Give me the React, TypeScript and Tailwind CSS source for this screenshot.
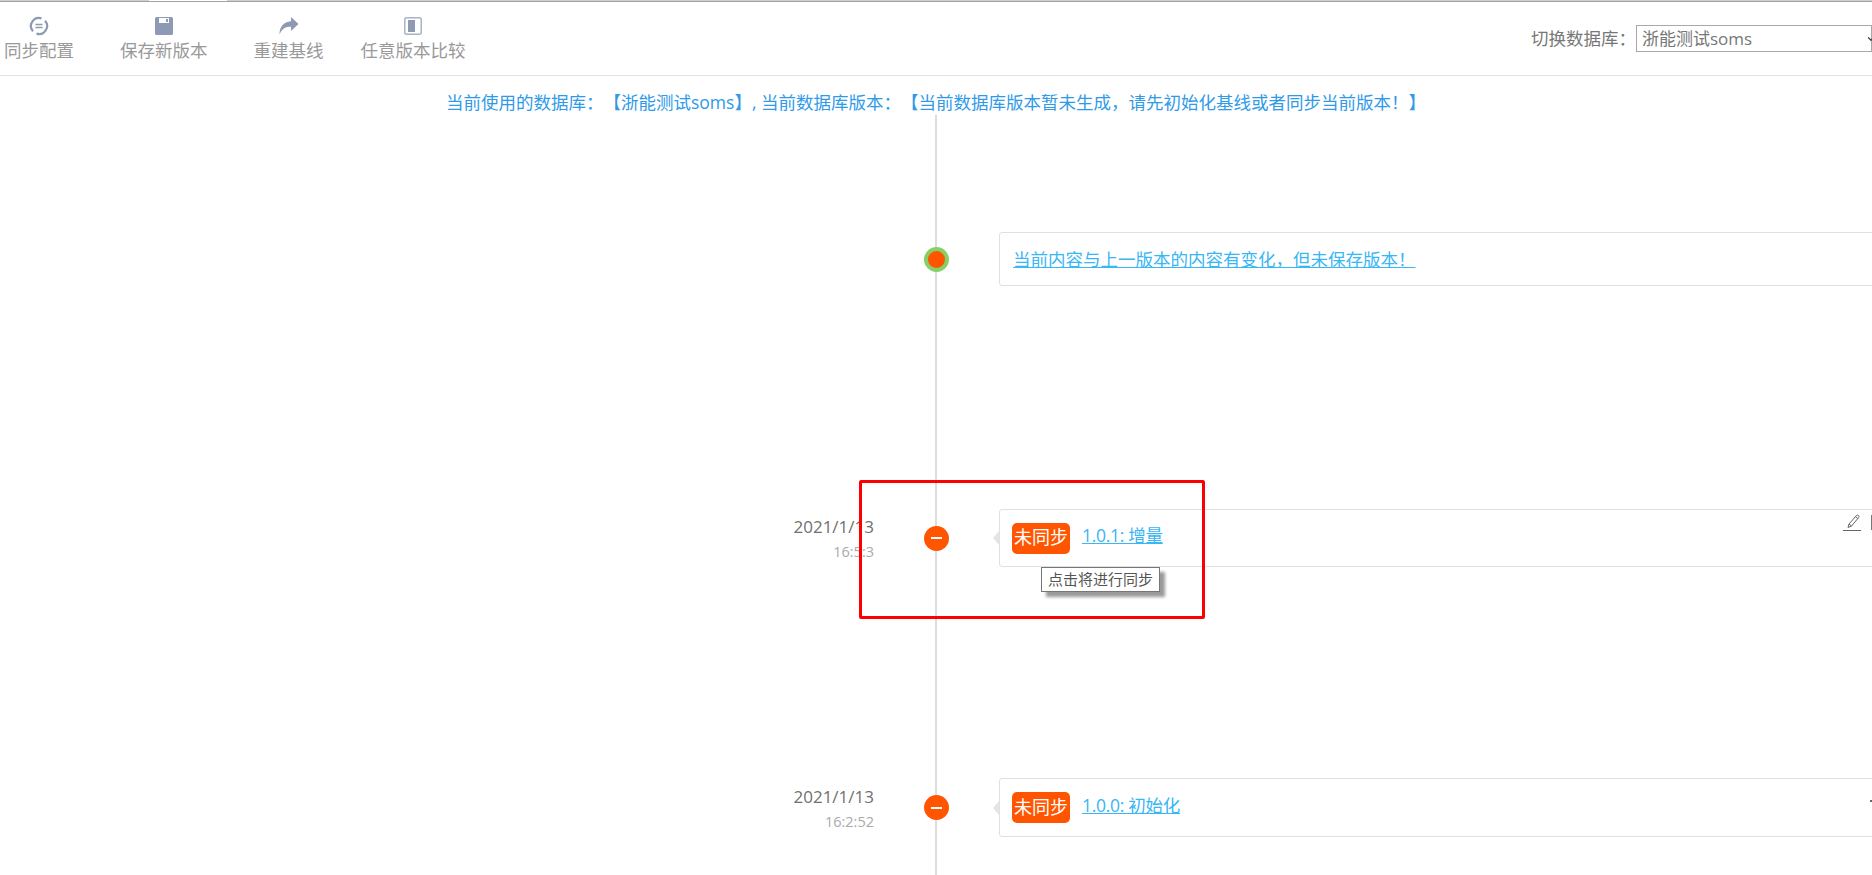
import React from 'react';
import { ChevronDown } from 'lucide-react';

const SyncIcon = () => (
  <svg width="20" height="20" viewBox="0 0 20 20" fill="none" stroke="#8e99b3">
    <path d="M12.500 2.400A8 8 0 0 0 4 15.300" strokeWidth="2.200" />
    <path d="M7.500 17.600A8 8 0 0 0 16 4.700" strokeWidth="2.200" />
    <path d="M6.500 8.500h7M6.500 11.500h7" strokeWidth="1.500" />
  </svg>
);

const SaveIcon = () => (
  <svg width="18" height="18" viewBox="0 0 18 18">
    <path
      d="M1.500 0h15A1.500 1.500 0 0 1 18 1.500v15a1.500 1.500 0 0 1-1.500 1.500h-15A1.500 1.500 0 0 1 0 16.500v-15A1.500 1.500 0 0 1 1.500 0zM4 1v5h10V1zM11 2h2v3h-2z"
      fill="#8e99b3"
      fillRule="evenodd"
    />
  </svg>
);

const ShareIcon = () => (
  <svg width="20" height="18" viewBox="0 0 20 18">
    <path d="M12 0l7.500 7-7.500 7V9.800C6.500 9.800 3 11.500 0.500 17.500 0.500 10 4.500 4.600 12 4.200z" fill="#8e99b3" />
  </svg>
);

const CompareIcon = () => (
  <svg width="18" height="18" viewBox="0 0 18 18">
    <rect x="0.750" y="0.750" width="16.500" height="16.500" rx="2" fill="none" stroke="#a9b2c6" strokeWidth="1.500" />
    <rect x="4" y="3" width="7" height="12" fill="#8e99b3" />
  </svg>
);

const PencilIcon = () => (
  <svg width="19" height="18" viewBox="0 0 19 18" fill="none" stroke="#666666" strokeWidth="1">
    <path d="M5 14.500l1-3.500 7.500-8.500a1.500 1.500 0 0 1 2.200 2L8.500 13z" />
    <path d="M6 11l2.500 2M12.500 3.500l2.500 2.200" />
    <path d="M0 17.500h18" />
  </svg>
);

const tools = [
  { label: '同步配置', icon: <SyncIcon />, className: '' },
  { label: '保存新版本', icon: <SaveIcon />, className: 'ml-[46px]' },
  { label: '重建基线', icon: <ShareIcon />, className: 'ml-[46px]' },
  { label: '任意版本比较', icon: <CompareIcon />, className: 'ml-[37px]' },
];

const Badge = () => (
  <span className="flex h-[31px] w-[58px] items-center justify-center rounded-[5px] bg-[#ff5500] pb-px text-[18px] text-white">
    未同步
  </span>
);

const MinusDot = () => (
  <span className="flex h-[25px] w-[25px] items-center justify-center rounded-full bg-[#ff5500]">
    <span className="h-0.5 w-[11px] bg-white" />
  </span>
);

const Arrow = () => (
  <span className="absolute left-[-7px] top-1/2 -translate-y-1/2 border-y-[7px] border-r-[6px] border-y-transparent border-r-[#e4e4e4]" />
);

const DateCell = ({ date, time, className }: { date: string; time: string; className: string }) => (
  <div className={`flex w-[874px] flex-col items-end ${className}`}>
    <span className="text-[17px] leading-[24px] text-[#707070]">{date}</span>
    <span className="text-[14.500px] leading-[25px] text-[#aaaaaa]">{time}</span>
  </div>
);

export default function App() {
  return (
    <div className="relative h-screen overflow-hidden bg-white font-['Open_Sans','Noto_Sans_CJK_SC',sans-serif] [text-spacing-trim:space-all]">
      <div className="flex h-px">
        <div className="w-[149px] bg-[#cfcfcf]" />
        <div className="w-[78px] bg-white" />
        <div className="flex-1 bg-[#cfcfcf]" />
      </div>
      <div className="h-px bg-[#a3a3a3]" />

      {/* toolbar */}
      <div className="flex h-[74px] items-start justify-between border-b border-[#e2e2e2] pl-1">
        <div className="flex">
          {tools.map((t) => (
            <div key={t.label} className={`flex flex-col items-center ${t.className}`}>
              <div className="mt-[15px] flex h-[18px] items-center">{t.icon}</div>
              <span className="mt-px text-[17.500px] leading-[28px] text-[#999999]">{t.label}</span>
            </div>
          ))}
        </div>
        <div className="mt-[23px] flex items-center">
          <span className="text-[17.500px] text-[#777777]">切换数据库：</span>
          <div className="flex h-[27px] w-[236px] items-center justify-between border border-[#a9a9a9] pl-[5px] text-[17px] text-[#777777]">
            浙能测试soms
            <ChevronDown size={10} strokeWidth={3} className="mr-[-5px] text-[#444444]" />
          </div>
        </div>
      </div>

      <div className="h-[39px] pt-[13px] text-center text-[17.500px] leading-[26px] text-[#2f9ae8]">
        当前使用的数据库：【浙能测试soms】, 当前数据库版本：【当前数据库版本暂未生成，请先初始化基线或者同步当前版本！】
      </div>

      {/* timeline */}
      <div className="relative h-[760px] pt-[117px]">
        <div className="absolute bottom-0 left-[935px] top-0 w-0.5 bg-[#dddddd]" />

        <div className="relative flex items-center">
          <div className="w-[874px]" />
          <div className="flex w-[125px] justify-center">
            <span className="flex h-[25px] w-[25px] items-center justify-center rounded-full border-4 border-[#87d068] bg-[#ff5500]" />
          </div>
          <div className="mr-[-10px] flex h-[54px] flex-1 items-center rounded-[3px] border border-[#e0e0e0] pl-[13px]">
            <a className="text-[17.500px] text-[#38b6f5] underline">当前内容与上一版本的内容有变化，但未保存版本！</a>
          </div>
        </div>

        <div className="relative mt-[223px] flex items-center">
          <DateCell date="2021/1/13" time="16:5:3" className="mt-[2px]" />
          <div className="flex w-[125px] justify-center">
            <MinusDot />
          </div>
          <div className="relative mr-[-10px] flex h-[58px] flex-1 items-center gap-[12px] rounded-[3px] border border-[#e0e0e0] pl-[12px]">
            <Arrow />
            <Badge />
            <a className="mb-[5px] text-[17.500px] tracking-[-0.3px] text-[#38b6f5] underline">1.0.1: 增量</a>
            <span className="absolute left-[843px] top-[3px]">
              <PencilIcon />
            </span>
            <span className="absolute left-[871px] top-[5px] h-[15px] w-px bg-[#777777]" />
            <span className="absolute left-[41px] top-[57px] z-10 border border-[#767676] bg-white px-[6px] text-[15px] leading-[23px] whitespace-nowrap text-[#555555] shadow-[5px_5px_3px_#9a9a9a]">
              点击将进行同步
            </span>
          </div>
        </div>

        <div className="relative mt-[211px] flex items-center">
          <DateCell date="2021/1/13" time="16:2:52" className="mt-[4px]" />
          <div className="flex w-[125px] justify-center">
            <MinusDot />
          </div>
          <div className="relative mr-[-10px] flex h-[59px] flex-1 items-center gap-[12px] rounded-[3px] border border-[#e0e0e0] pl-[12px]">
            <Arrow />
            <Badge />
            <a className="mb-[5px] text-[17.500px] tracking-[-0.3px] text-[#38b6f5] underline">1.0.0: 初始化</a>
            <span className="absolute left-[870px] top-[21px] h-0.5 w-[3px] bg-[#666666]" />
          </div>
        </div>
      </div>

      {/* red annotation drawn over the screenshot */}
      <div className="absolute left-[859px] top-[480px] z-20 h-[139px] w-[346px] rounded-[2px] border-[3px] border-[#ff0000]" />
    </div>
  );
}
